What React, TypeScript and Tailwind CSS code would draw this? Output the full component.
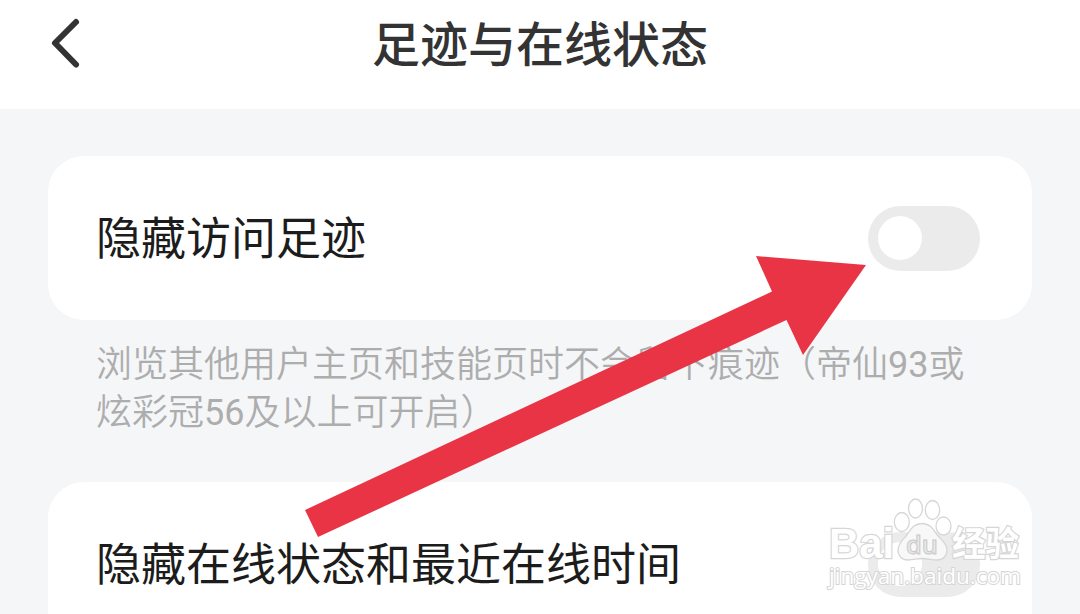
const Toggle = () => {
  return (
    <div className="flex h-[65px] w-28 items-center rounded-full bg-[#ebebeb] px-2.5">
      <div className="h-11 w-11 rounded-full bg-white" />
    </div>
  );
};

const SettingCard = ({ label }: { label: string }) => {
  return (
    <div className="flex h-[164px] shrink-0 items-center justify-between rounded-[36px] bg-white pr-[52px] pl-12">
      <span className="pt-[3px] text-[45px] leading-none whitespace-nowrap text-[#1c1c1c]">{label}</span>
      <Toggle />
    </div>
  );
};

const Arrow = () => {
  return (
    <svg className="absolute top-0 left-0" width="1080" height="614" viewBox="0 0 1080 614">
      <path d="M305 510L772 291.500L756 256L866 265L803 355L786.500 320L318 537Z" fill="#e93446" />
    </svg>
  );
};

const Watermark = () => {
  return (
    <svg
      className="absolute top-[490px] left-[820px]"
      width="210"
      height="110"
      viewBox="820 490 210 110"
      fill="#fff"
      stroke="#d6d6d6"
      strokeWidth="1.300"
    >
      <g strokeWidth="2.400" paintOrder="stroke" fontWeight="700">
        <text x="829" y="558" fontSize="42" textLength="65" lengthAdjust="spacingAndGlyphs" fontFamily="Liberation Sans, sans-serif">
          Bai
        </text>
        <text x="952" y="556" fontSize="34" textLength="67" lengthAdjust="spacingAndGlyphs" fontFamily="Noto Sans CJK SC, sans-serif">
          经验
        </text>
      </g>
      <ellipse cx="901.800" cy="522" rx="7.500" ry="9.500" />
      <ellipse cx="915.500" cy="508.500" rx="7" ry="9.500" />
      <ellipse cx="932.500" cy="510" rx="7.200" ry="9.500" />
      <ellipse cx="943.500" cy="526" rx="7.500" ry="9" />
      <path
        d="M922 523.500C914 523.500 911 529 907.500 534C903 540 898 543 898 550C898 556 902 560 908 560C914 560 917 558.500 922 558.500C928 558.500 932 560 937 560C943 560 947 556 947 550C947 543 941 540 936.500 534C933 529 930 523.500 922 523.500Z"
        fill="#f8f8f8"
      />
      <text x="906" y="554" fontSize="26" textLength="32" lengthAdjust="spacingAndGlyphs" fill="#e8e8e8" stroke="#c8c8c8" strokeWidth="1" fontFamily="Open Sans, sans-serif" fontWeight="600">
        du
      </text>
      <text x="829" y="584" fontSize="21" strokeWidth="2" paintOrder="stroke" textLength="192" lengthAdjust="spacingAndGlyphs" fontFamily="Open Sans, sans-serif">
        jingyan.baidu.com
      </text>
    </svg>
  );
};

const App = () => {
  return (
    <div className="relative flex h-[614px] w-[1080px] flex-col overflow-hidden bg-[#f5f6f8] font-[Roboto,'Noto_Sans_CJK_SC',sans-serif]">
      <header className="grid h-[109px] shrink-0 grid-cols-[1fr_auto_1fr] bg-white">
        <svg className="mt-[15px] ml-[46px]" width="40" height="56" viewBox="0 0 40 56" fill="none" stroke="#333" strokeWidth="6" strokeLinecap="round" strokeLinejoin="round">
          <path d="M30 7L9 28L30 49.500" />
        </svg>
        <h1 className="pt-[22px] text-[48px] leading-none font-medium text-[#333]">足迹与在线状态</h1>
      </header>
      <main className="flex flex-col px-12 pt-[47px]">
        <SettingCard label="隐藏访问足迹" />
        <p className="mt-[21px] mb-[45px] pl-12 text-[36px] leading-[48px] font-[350] whitespace-nowrap text-[#adadad]">
          浏览其他用户主页和技能页时不会留下痕迹（帝仙<span className="font-normal">93</span>或
          <br />
          炫彩冠<span className="font-normal">56</span>及以上可开启）
        </p>
        <SettingCard label="隐藏在线状态和最近在线时间" />
      </main>
      <Arrow />
      <Watermark />
    </div>
  );
};

export default App;
